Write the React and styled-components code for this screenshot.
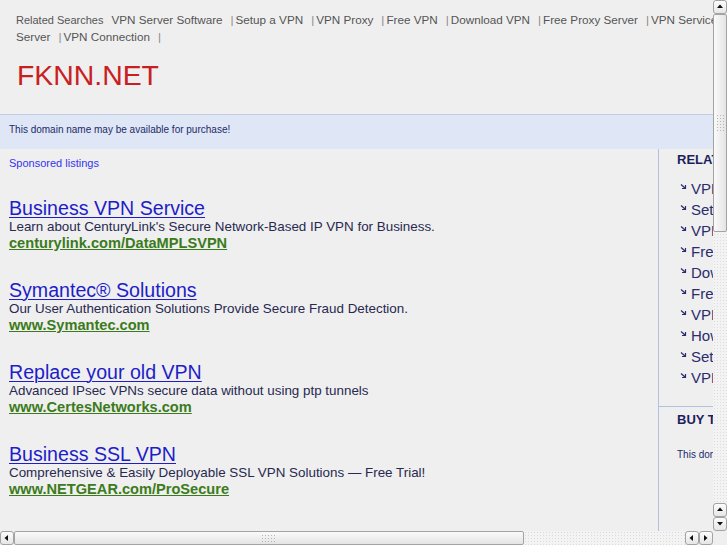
import React from 'react';
import styled, {createGlobalStyle} from 'styled-components';

const GlobalStyle = createGlobalStyle`
  html, body {
    margin: 0;
    padding: 0;
    background: #efefef;
  }
  body {
    font-family: "Liberation Sans", Arial, sans-serif;
  }
`;

const Window = styled.div`
  width: 727px;
  height: 545px;
  display: grid;
  grid-template-columns: 713px 14px;
  grid-template-rows: 531px 14px;
  background: #efefef;
  overflow: hidden;
`;

const Viewport = styled.div`
  overflow: hidden;
`;

const Page = styled.div`
  width: 960px;
  min-height: 531px;
  display: flex;
  flex-direction: column;
`;

const Header = styled.div`
  height: 114px;
  box-sizing: border-box;
  padding: 11px 16px 0;
`;

const Related = styled.div`
  font-size: 11.7px;
  line-height: 17px;
  color: #555;
`;

const RelatedLabel = styled.span`
  font-size: 11px;
  line-height: 1;
  margin-right: 8px;
`;

const TopLink = styled.a`
  color: #555;
  text-decoration: none;
`;

const Sep = styled.span`
  color: #8a8a8a;
  margin: 0 2px 0 8px;
`;

const Logo = styled.div`
  margin-top: 14px;
  padding-left: 1px;
  font-size: 28.4px;
  line-height: 32px;
  color: #c8201f;
`;

const Notice = styled.div`
  border-top: 1px solid #c3cde6;
  background: #dfe6f5;
  padding: 9px 9px 13px;
  font-size: 10px;
  line-height: 12px;
  color: #1c2a6a;
`;

const Body = styled.div`
  flex: 1;
  display: flex;
`;

const Main = styled.div`
  width: 658px;
  flex-shrink: 0;
  padding: 8px 9px 0;
  box-sizing: border-box;
`;

const Sponsored = styled.div`
  font-size: 11px;
  line-height: 13px;
  color: #3434ee;
`;

const Ad = styled.div`
  margin-top: 28px;
`;

const AdTitle = styled.a`
  display: block;
  font-size: 19.6px;
  line-height: 20px;
  color: #1d1dc9;
  text-decoration: underline;
  text-decoration-thickness: 1px;
  text-underline-offset: 2px;
`;

const AdText = styled.div`
  font-size: 13.4px;
  line-height: 17px;
  color: #27294f;
`;

const AdUrl = styled.a`
  display: block;
  font-size: 14.6px;
  line-height: 17px;
  font-weight: bold;
  color: #3b7b1c;
  text-decoration: underline;
  text-underline-offset: 1px;
`;

const Sidebar = styled.div`
  flex: 1;
  border-left: 1px solid #b3c0e2;
`;

const SideSection = styled.div`
  padding: ${p => p.$top}px 0 ${p => p.$bottom}px 18px;
  border-bottom: ${p => p.$divided ? '1px solid #b3c0e2' : 'none'};
  white-space: nowrap;
`;

const SideHeading = styled.div`
  font-size: 13px;
  line-height: 16px;
  font-weight: bold;
  color: #1c1f5e;
`;

const SideList = styled.ul`
  list-style: none;
  margin: 10px 0 0;
  padding: 0 0 0 3px;
`;

const SideItem = styled.li`
  display: flex;
  align-items: center;
  gap: 4px;
  font-size: 15px;
  line-height: 21px;
  color: #2a2c6c;

  svg {
    margin-top: -4px;
  }
`;

const SideText = styled.div`
  margin-top: 21px;
  font-size: 10px;
  line-height: 12px;
  color: #1c2a6a;
`;

const VBar = styled.div`
  display: flex;
  flex-direction: column;
  background: #efefef;
`;

const HBar = styled.div`
  display: flex;
  background: #efefef;
`;

const Corner = styled.div`
  background: #efefef;
`;

const Track = styled.div`
  flex: 1;
  display: flex;
  flex-direction: ${p => p.$vertical ? 'column' : 'row'};
  background-color: #f3f3f3;
  background-image: radial-gradient(#dcdcdc 0.6px, transparent 0.8px);
  background-size: 3px 3px;
`;

const Thumb = styled.div`
  ${p => p.$vertical ? 'height: 218px; width: 100%;' : 'width: 510px; height: 100%;'}
  box-sizing: border-box;
  border: 1px solid #a3a3a3;
  border-radius: 2px;
  background: ${p => p.$vertical
    ? 'linear-gradient(to right, #fafafa, #e4e4e4)'
    : 'linear-gradient(to bottom, #fafafa, #e4e4e4)'};
  display: flex;
  align-items: center;
  justify-content: center;
`;

const Grip = styled.div`
  width: ${p => p.$vertical ? '8px' : '16px'};
  height: ${p => p.$vertical ? '18px' : '8px'};
  background-image: radial-gradient(#b5b5b5 0.7px, transparent 0.9px);
  background-size: 3px 3px;
`;

const ScrollButton = styled.div`
  width: 14px;
  height: 14px;
  flex-shrink: 0;
  box-sizing: border-box;
  border: 1px solid #a3a3a3;
  border-radius: 3px;
  background: linear-gradient(to bottom, #fcfcfc, #e6e6e6);
  display: flex;
  align-items: center;
  justify-content: center;
`;

const Arrow = ({dir}) => {
  const points = {
    up: '1,5 4,1.5 7,5',
    down: '1,2 4,5.5 7,2',
    left: '5,1 1.5,4 5,7',
    right: '2,1 5.5,4 2,7',
  }[dir];
  return (
    <svg width="8" height="8" viewBox="0 0 8 8">
      <polygon points={points} fill="#111" />
    </svg>
  );
};

const BulletIcon = () => (
  <svg width="7" height="7" viewBox="0 0 7 7">
    <path d="M1 1.5 L5 5 M5.5 2 L5.5 5.5 L2 5.5" stroke="#2a2c6c" strokeWidth="1.2" fill="none" />
  </svg>
);

const topSearches = [
  'VPN Server Software',
  'Setup a VPN',
  'VPN Proxy',
  'Free VPN',
  'Download VPN',
  'Free Proxy Server',
  'VPN Service',
  'How to Setup a VPN',
  'Setup a VPN Server',
  'VPN Connection',
];

const ads = [
  {
    title: 'Business VPN Service',
    text: "Learn about CenturyLink's Secure Network-Based IP VPN for Business.",
    url: 'centurylink.com/DataMPLSVPN',
  },
  {
    title: 'Symantec® Solutions',
    text: 'Our User Authentication Solutions Provide Secure Fraud Detection.',
    url: 'www.Symantec.com',
  },
  {
    title: 'Replace your old VPN',
    text: 'Advanced IPsec VPNs secure data without using ptp tunnels',
    url: 'www.CertesNetworks.com',
  },
  {
    title: 'Business SSL VPN',
    text: 'Comprehensive & Easily Deployable SSL VPN Solutions — Free Trial!',
    url: 'www.NETGEAR.com/ProSecure',
  },
];

export default function App() {
  return (
    <>
      <GlobalStyle />
      <Window>
        <Viewport>
          <Page>
            <Header>
              <Related>
                <RelatedLabel>Related Searches</RelatedLabel>
                {topSearches.map((item, index) => (
                  <React.Fragment key={index}>
                    <TopLink href="#">{item}</TopLink>
                    <Sep>|</Sep>
                  </React.Fragment>
                ))}
              </Related>
              <Logo>FKNN.NET</Logo>
            </Header>
            <Notice>This domain name may be available for purchase!</Notice>
            <Body>
              <Main>
                <Sponsored>Sponsored listings</Sponsored>
                {ads.map((ad, index) => (
                  <Ad key={index}>
                    <AdTitle href="#">{ad.title}</AdTitle>
                    <AdText>{ad.text}</AdText>
                    <AdUrl href="#">{ad.url}</AdUrl>
                  </Ad>
                ))}
              </Main>
              <Sidebar>
                <SideSection $top={3} $bottom={18} $divided>
                  <SideHeading>RELATED SEARCHES</SideHeading>
                  <SideList>
                    {topSearches.map((item, index) => (
                      <SideItem key={index}>
                        <BulletIcon />
                        {item}
                      </SideItem>
                    ))}
                  </SideList>
                </SideSection>
                <SideSection $top={5} $bottom={20}>
                  <SideHeading>BUY THIS DOMAIN</SideHeading>
                  <SideText>This domain may be for sale. Inquire now.</SideText>
                </SideSection>
              </Sidebar>
            </Body>
          </Page>
        </Viewport>
        <VBar>
          <ScrollButton><Arrow dir="up" /></ScrollButton>
          <Track $vertical>
            <Thumb $vertical><Grip $vertical /></Thumb>
          </Track>
          <ScrollButton><Arrow dir="up" /></ScrollButton>
          <ScrollButton><Arrow dir="down" /></ScrollButton>
        </VBar>
        <HBar>
          <ScrollButton><Arrow dir="left" /></ScrollButton>
          <Track>
            <Thumb><Grip /></Thumb>
          </Track>
          <ScrollButton><Arrow dir="left" /></ScrollButton>
          <ScrollButton><Arrow dir="right" /></ScrollButton>
        </HBar>
        <Corner />
      </Window>
    </>
  );
}
